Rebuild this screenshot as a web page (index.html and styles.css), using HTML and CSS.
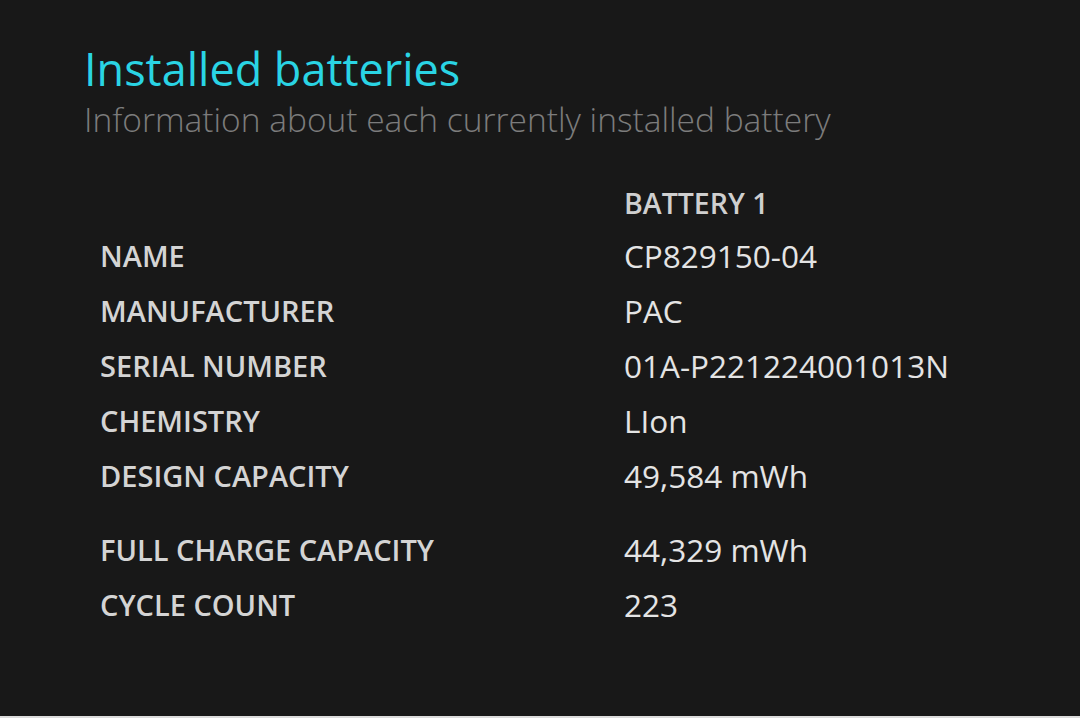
FILE: index.html
```html
<!DOCTYPE html>
<html lang="en">
<head>
  <meta charset="UTF-8" />
  <meta name="viewport" content="width=device-width, initial-scale=1.0" />
  <title>Battery report</title>
  <link rel="stylesheet" href="styles.css">
</head>
<body>
  <main class="report">
    <h1>Installed batteries</h1>
    <p class="subtitle">Information about each currently installed battery</p>
    <table class="batteries">
      <thead>
        <tr><th></th><th class="col-head">BATTERY 1</th></tr>
      </thead>
      <tbody>
        <tr><td class="label">NAME</td><td class="value">CP829150-04</td></tr>
        <tr><td class="label">MANUFACTURER</td><td class="value">PAC</td></tr>
        <tr><td class="label">SERIAL NUMBER</td><td class="value">01A-P221224001013N</td></tr>
        <tr><td class="label">CHEMISTRY</td><td class="value">LIon</td></tr>
        <tr><td class="label">DESIGN CAPACITY</td><td class="value">49,584 mWh</td></tr>
        <tr class="spacer"><td colspan="2"></td></tr>
        <tr><td class="label">FULL CHARGE CAPACITY</td><td class="value">44,329 mWh</td></tr>
        <tr><td class="label">CYCLE COUNT</td><td class="value">223</td></tr>
      </tbody>
    </table>
  </main>
</body>
</html>
```

FILE: styles.css
```css
html, body { margin: 0; padding: 0; }
body { background: #181818; color: #d8d8d8; font-family: "Open Sans", "Noto Sans", sans-serif; height: 716px; border-bottom: 2px solid #dcdcdc; overflow: hidden; }
.report { padding: 40px 0 0 84px; }
h1 { margin: 0; font-size: 45px; font-weight: 400; color: #2ad4e4; line-height: 58px; }
.subtitle { margin: 0; font-size: 33.5px; font-weight: 300; color: #7c7c7c; line-height: 42px; }
.batteries { border-collapse: collapse; margin: 37px 0 0 16px; }
.batteries td, .batteries th { padding: 0; text-align: left; vertical-align: middle; }
.col-head { font-size: 28.5px; font-weight: 600; color: #cfcfcf; height: 51px; }
.label { width: 524px; font-size: 29px; font-weight: 600; color: #d4d4d4; height: 55px; }
.value { font-size: 31.5px; font-weight: 400; color: #e4e4e4; height: 55px; }
.spacer td { height: 19px; }
```
